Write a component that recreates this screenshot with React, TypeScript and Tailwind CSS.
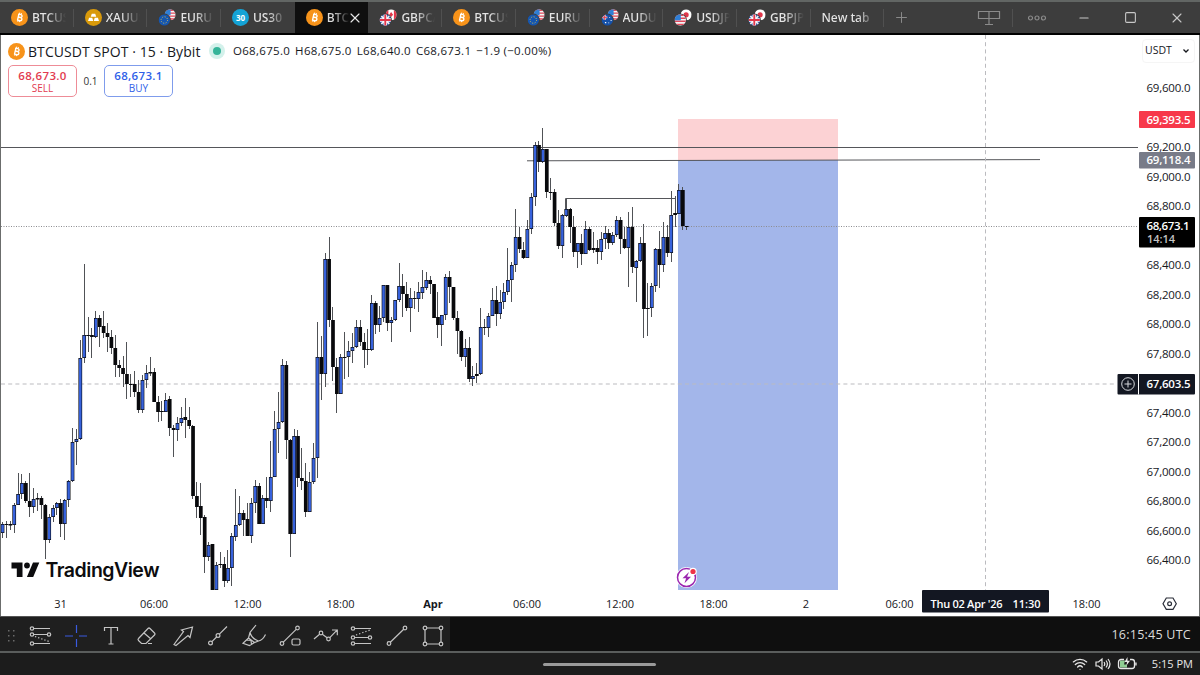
import React from 'react';
import { Minus, Plus, Square, Wifi, X } from 'lucide-react';

type Candle = [number, number, number, number, 0 | 1];

// high, body top, body bottom, low, rising
const candles: Candle[] = [
  [522, 524, 533, 538, 1], [521, 524, 525, 538, 0], [521, 524, 525.5, 530, 0], [503, 505, 525, 533, 1],
  [473, 494, 505, 505, 1], [474, 483, 494, 499, 1], [481, 483, 501, 503, 0], [473, 501, 507, 517, 0],
  [488, 499, 507, 513, 1], [493, 498, 499.5, 511, 0], [496, 498, 505, 519, 0], [504, 505, 540, 559, 0],
  [514, 517, 540, 543, 1], [505, 508, 517, 522, 1], [502, 503, 508, 515, 1], [499, 503, 524, 537, 0],
  [499, 500, 524, 540, 1], [480, 481, 500, 507, 1], [428, 442, 481, 482, 1], [429, 439, 442, 465, 1],
  [340, 358, 439, 440, 1], [264, 335, 358, 363, 1], [317, 335, 336, 352, 0], [328, 335, 337, 358, 0],
  [311, 318, 337, 338, 1], [315, 318, 327, 347, 0], [311, 326, 333, 338, 0], [323, 333, 337, 352, 0],
  [330, 337, 348, 354, 0], [335, 348, 365, 377, 0], [360, 365, 368, 377, 0], [356, 368, 374, 387, 0],
  [342, 374, 384, 399, 0], [374, 384, 385, 397, 0], [371, 384, 392, 397, 0], [380, 392, 410, 413, 0],
  [375, 380, 410, 413, 1], [365, 373, 380, 388, 1], [357, 372, 373.5, 376, 1], [368, 372, 402, 402, 0],
  [396, 402, 412, 422, 0], [401, 411, 412, 421, 0], [393, 400, 412, 412, 1], [396, 399, 428, 436, 0],
  [425, 428, 430, 457, 0], [417, 423, 430, 441, 1], [407, 418, 423, 426, 1], [398, 417, 420, 438, 0],
  [407, 420, 426, 429, 0], [425, 426, 496, 499, 0], [482, 496, 507, 518, 0], [483, 506, 518, 535, 0],
  [515, 517, 557, 573, 0], [542, 545, 557, 561, 1], [544, 544, 590, 590, 0], [562, 565, 590, 590, 1],
  [552, 564, 565, 568, 0], [557, 564, 581, 587, 0], [550, 568, 581, 583, 1], [533, 536, 568, 586, 1],
  [489, 525, 537, 541, 1], [496, 513, 525, 526, 1], [510, 513, 520, 536, 0], [503, 519, 536, 536, 0],
  [498, 503, 536, 543, 1], [480, 486, 503, 513, 1], [483, 486, 524, 524, 0], [495, 498, 524, 524, 1],
  [477, 498, 501, 508, 0], [441, 477, 501, 512, 1], [411, 429, 477, 477, 1], [392, 422, 429, 453, 1],
  [359, 365, 422, 423, 1], [361, 365, 440, 459, 0], [439, 440, 534, 557, 0], [429, 436, 534, 534, 1],
  [430, 436, 478, 487, 0], [448, 478, 481, 490, 0], [463, 481, 512, 517, 0], [472, 482, 512, 512, 1],
  [443, 458, 482, 484, 1], [322, 357, 458, 478, 1], [336, 357, 374, 400, 0], [253, 259, 374, 387, 1],
  [237, 259, 320, 327, 0], [307, 320, 367, 381, 0], [358, 367, 394, 413, 0], [354, 357, 394, 394, 1],
  [332, 357, 358, 379, 0], [341, 351, 357, 377, 1], [333, 347, 351, 363, 1], [320, 327, 347, 348, 1],
  [320, 327, 342, 346, 0], [333, 342, 350, 368, 0], [329, 349, 350, 365, 0], [295, 303, 350, 351, 1],
  [301, 303, 325, 334, 0], [306, 318, 325, 332, 1], [285, 285, 318, 322, 1], [285, 285, 323, 331, 0],
  [317, 320, 323, 342, 1], [300, 300, 320, 321, 1], [263, 286, 300, 302, 1], [274, 286, 294, 317, 0],
  [282, 294, 308, 311, 0], [288, 298, 308, 332, 1], [291, 298, 299, 309, 0], [282, 292, 299, 312, 1],
  [270, 287, 293, 299, 1], [272, 280, 288, 290, 1], [276, 280, 284, 294, 0], [284, 284, 318, 318, 0],
  [292, 317, 325, 338, 0], [315, 315, 325, 346, 1], [274, 277, 315, 320, 1], [271, 277, 287, 303, 0],
  [287, 287, 318, 320, 0], [311, 318, 331, 354, 0], [330, 331, 357, 361, 0], [339, 348, 357, 367, 1],
  [337, 348, 379, 382, 0], [366, 376, 379, 386, 1], [363, 374, 376, 383, 1], [308, 327, 374, 375, 1],
  [319, 327, 328, 335, 0], [313, 316, 328, 337, 1], [288, 300, 316, 316, 1], [286, 300, 314, 326, 0],
  [290, 302, 314, 319, 1], [283, 292, 302, 309, 1], [248, 280, 292, 295, 1], [262, 265, 280, 302, 1],
  [209, 237, 265, 272, 1], [227, 237, 249, 253, 0], [242, 250, 258, 259, 0], [220, 229, 258, 258, 1],
  [193, 197, 229, 234, 1], [142, 145, 197, 206, 1], [141, 145, 162, 172, 0], [128, 149, 162, 163, 1],
  [149, 149, 192, 198, 0], [178, 192, 193, 200, 0], [189, 192, 223, 226, 0], [210, 223, 246, 249, 0],
  [214, 215, 246, 258, 1], [198, 209, 216, 217, 1], [208, 209, 227, 243, 0], [216, 227, 252, 257, 0],
  [243, 243, 252, 268, 1], [234, 243, 254, 265, 0], [221, 229, 254, 254, 1], [227, 229, 250, 251, 0],
  [232, 248, 250, 253, 0], [240, 248, 252, 264, 0], [232, 239, 252, 260, 1], [226, 233, 239, 249, 1],
  [229, 233, 243, 249, 0], [232, 235, 243, 245, 1], [216, 220, 235, 237, 1], [217, 220, 239, 254, 0],
  [227, 239, 248, 249, 0], [212, 227, 248, 287, 1], [207, 227, 267, 273, 0], [260, 261, 268, 302, 1],
  [237, 243, 261, 262, 1], [224, 243, 309, 338, 0], [283, 308, 309, 336, 0], [283, 286, 308, 317, 1],
  [248, 249, 286, 292, 1], [231, 249, 265, 288, 0], [222, 237, 265, 272, 1], [225, 237, 253, 257, 0],
  [191, 215, 253, 262, 1], [196, 213, 215, 227, 0], [184, 190, 214, 214, 1], [187, 190, 226, 230, 0],
  [226, 226, 227, 230, 0],
];

const prices = [
  '69,600.0', '', '69,200.0', '69,000.0', '68,800.0', '', '68,400.0', '68,200.0', '68,000.0',
  '67,800.0', '', '67,400.0', '67,200.0', '67,000.0', '66,800.0', '66,600.0', '66,400.0',
];

const times: [number, string][] = [
  [60.5, '31'], [154, '06:00'], [247.5, '12:00'], [340.5, '18:00'], [433, 'Apr'], [527, '06:00'],
  [620, '12:00'], [713.5, '18:00'], [806, '2'], [899.5, '06:00'], [1086.5, '18:00'],
];

type FlagName = 'us' | 'eu' | 'gb' | 'ca' | 'au' | 'jp';

const Flag: React.FC<{ name: FlagName }> = ({ name }) => {
  switch (name) {
    case 'us':
      return (
        <>
          <rect width="12" height="12" fill="#f4f4f6" />
          <path d="M0 1h12M0 4.2h12M0 7.4h12M0 10.6h12" stroke="#e0485a" strokeWidth="1.5" />
          <rect width="6.5" height="6.3" fill="#2f7fd6" />
        </>
      );
    case 'eu':
      return (
        <>
          <rect width="12" height="12" fill="#1556b0" />
          <circle cx="6" cy="6" r="3.4" fill="none" stroke="#e8c94a" strokeWidth="1" strokeDasharray="1 1.67" />
        </>
      );
    case 'gb':
      return (
        <>
          <rect width="12" height="12" fill="#2a54a8" />
          <path d="M0 0l12 12M12 0L0 12" stroke="#f0f0f0" strokeWidth="1.8" />
          <path d="M6 0v12M0 6h12" stroke="#fff" strokeWidth="3.8" />
          <path d="M6 0v12M0 6h12" stroke="#e0374b" strokeWidth="2" />
        </>
      );
    case 'ca':
      return (
        <>
          <rect width="12" height="12" fill="#fff" />
          <path d="M0 0h3v12H0zM9 0h3v12H9zM6 3l2.2 3L6 8.5 3.8 6z" fill="#e0374b" />
        </>
      );
    case 'au':
      return (
        <>
          <rect width="12" height="12" fill="#1450a8" />
          <path d="M0 3.2h6M3.2 0v6" stroke="#fff" strokeWidth="2" />
          <path d="M0 3.2h6M3.2 0v6" stroke="#e0374b" strokeWidth="1" />
          <path d="M8 3h1v1H8zM9.5 6h1v1h-1zM7 8.5h1v1H7zM3.5 8h1.4v1.4H3.5z" fill="#fff" />
        </>
      );
    default:
      return (
        <>
          <rect width="12" height="12" fill="#fff" />
          <circle cx="6" cy="6" r="2.8" fill="#e0374b" />
        </>
      );
  }
};

const PairIcon: React.FC<{ front: FlagName; back: FlagName; id: string }> = ({ front, back, id }) => (
  <svg className="h-[18px] w-[18px] shrink-0" viewBox="0 0 18 18">
    <clipPath id={`${id}-flag`}>
      <circle cx="6" cy="6" r="6" />
    </clipPath>
    <g transform="translate(6.6 0.3) scale(.92)" clipPath={`url(#${id}-flag)`}>
      <Flag name={back} />
    </g>
    <circle cx="6.3" cy="11" r="6.5" fill="#3d3d3d" />
    <g transform="translate(0.6 5.3) scale(.95)" clipPath={`url(#${id}-flag)`}>
      <Flag name={front} />
    </g>
  </svg>
);

const BitcoinIcon = () => (
  <svg className="h-[17px] w-[17px] shrink-0" viewBox="0 0 18 18">
    <circle cx="9" cy="9" r="9" fill="#f7931a" />
    <g transform="rotate(13 9 9)" fill="none" stroke="#fff">
      <path d="M7 5.7h2.8a1.55 1.55 0 0 1 0 3.1H7.5h2.7a1.7 1.7 0 0 1 0 3.4H7M7.6 5.7v6.5" strokeWidth="1.5" />
      <path d="M8.2 4v1.6M10 4v1.6M8.2 12.2v1.6M10 12.2v1.6" strokeWidth="1" />
    </g>
  </svg>
);

const GoldIcon = () => (
  <svg className="h-[17px] w-[17px] shrink-0" viewBox="0 0 18 18">
    <circle cx="9" cy="9" r="9" fill="#d99a0b" />
    <path d="M7.2 5h3.6l1.1 3.2H6.1zM4.3 9.2h3.4l1 3.4H3.2zM10.3 9.2h3.4l1.1 3.4H9.3z" fill="#fff" />
  </svg>
);

const DowIcon = () => (
  <span className="flex h-[17px] w-[17px] shrink-0 items-center justify-center rounded-full bg-[#14a3d6] text-[8px] font-bold text-white">
    30
  </span>
);

const tabs: { label: string; icon: React.ReactNode; active?: boolean }[] = [
  { label: 'BTCUS', icon: <BitcoinIcon /> },
  { label: 'XAUUS', icon: <GoldIcon /> },
  { label: 'EURU', icon: <PairIcon id="eurusd" front="eu" back="us" /> },
  { label: 'US30', icon: <DowIcon /> },
  { label: 'BTC', icon: <BitcoinIcon />, active: true },
  { label: 'GBPCA', icon: <PairIcon id="gbpcad" front="gb" back="ca" /> },
  { label: 'BTCUS', icon: <BitcoinIcon /> },
  { label: 'EURU', icon: <PairIcon id="eurusd2" front="eu" back="us" /> },
  { label: 'AUDU', icon: <PairIcon id="audusd" front="au" back="us" /> },
  { label: 'USDJP', icon: <PairIcon id="usdjpy" front="us" back="jp" /> },
  { label: 'GBPJP', icon: <PairIcon id="gbpjpy" front="gb" back="jp" /> },
];

const TabBar = () => (
  <header className="flex h-[35px] items-stretch border-t-2 border-b-2 border-t-[#626664] border-b-black bg-[#3d3d3d] text-[12px] font-semibold text-[#dcdcdc]">
    {tabs.map((tab, i) =>
      tab.active ? (
        <div key={i} className="flex w-[73.7px] shrink-0 items-center bg-[#0f0f0f] pl-[11px]">
          {tab.icon}
          <span className="ml-1 w-[23px] overflow-hidden bg-gradient-to-r from-[#dcdcdc] from-30% to-[#0f0f0f] bg-clip-text whitespace-nowrap text-transparent">
            {tab.label}
          </span>
          <X className="-ml-[3px] h-4 w-4 text-[#e8e8e8]" strokeWidth={1.7} />
        </div>
      ) : (
        <div
          key={i}
          className={`flex w-[73.7px] shrink-0 items-center pl-[11px] ${i === 3 ? 'rounded-br-md' : ''} ${i === 5 ? 'rounded-bl-md' : ''}`}
        >
          {tab.icon}
          <span className="ml-1 w-[34px] overflow-hidden bg-gradient-to-r from-[#e4e4e4] from-45% to-[#3d3d3d] bg-clip-text tracking-[-0.1px] whitespace-nowrap text-transparent">
            {tab.label}
          </span>
          {i !== 3 && <span className="ml-auto h-[18px] w-px bg-[#505050]" />}
        </div>
      ),
    )}
    <div className="flex w-[73.3px] shrink-0 items-center pl-[11px]">
      <span className="bg-gradient-to-r from-[#e4e4e4] from-75% to-[#777] bg-clip-text tracking-[-0.1px] text-transparent">New tab</span>
      <span className="ml-auto h-[18px] w-px bg-[#505050]" />
    </div>
    <div className="flex grow items-center text-[#8b8b8b]">
      <Plus className="ml-[9px] h-[17px] w-[17px]" strokeWidth={1.4} />
      <svg className="ml-[67px] h-4 w-6" viewBox="0 0 24 16" fill="none" stroke="currentColor" strokeWidth="1.2">
        <path d="M1.5 1.5h21v7h-21zM12 1.5v13M8 14.5h8" />
      </svg>
      <span className="ml-[11px] h-[18px] w-px bg-[#505050]" />
      <svg className="ml-[14px] h-2 w-5" viewBox="0 0 20 8" fill="none" stroke="currentColor" strokeWidth="1.2">
        <circle cx="3.5" cy="4" r="2" />
        <circle cx="10" cy="4" r="2" />
        <circle cx="16.5" cy="4" r="2" />
      </svg>
      <Minus className="ml-[30px] h-[14px] w-[14px] text-[#c8c8c8]" strokeWidth={2} />
      <Square className="ml-[33px] h-[13px] w-[13px] text-[#c8c8c8]" strokeWidth={2} />
      <X className="ml-[32px] h-4 w-4 text-[#c8c8c8]" strokeWidth={1.6} />
    </div>
  </header>
);

const Chart = () => (
  <svg className="block h-[581px] w-[1198px]" viewBox="1 35 1198 581" fontSize="11.5" fill="#16181d">
    {/* Short position */}
    <rect x="678" y="119" width="160" height="41" fill="#fcd2d4" />
    <rect x="678" y="160" width="160" height="430" fill="#a3b6ea" />

    {/* Levels */}
    <path d="M1 147.5H1138M527 160.8L1040 159.6M565.5 209V198.5H675" stroke="#55565a" strokeWidth="1" fill="none" />
    <path d="M1 226.5H1138" stroke="#8c8c90" strokeDasharray="1 1.5" />
    <path d="M1 384H1117M985.5 35V590" stroke="#bbbbbf" strokeDasharray="4 3.2" />

    {/* Candles */}
    {candles.map(([high, top, bottom, low, rising], i) => {
      const x = 2.5 + i * 3.8875;
      const height = Math.max(1, bottom - top);
      return (
        <g key={i}>
          <rect x={Math.floor(x)} y={high} width="1" height={low - high} fill="#505256" />
          <rect x={x - 1.8} y={top} width="3.7" height={height} fill="#08090c" />
          {rising === 1 && height > 2 && (
            <rect x={x - 1.2} y={top + 0.7} width="2.5" height={height - 1.4} fill="#3762dc" />
          )}
        </g>
      );
    })}

    {/* Price axis */}
    {prices.map((price, i) =>
      price ? (
        <text key={i} x="1146.5" y={92 + i * 29.53} textLength="44" fontWeight="500">
          {price}
        </text>
      ) : null,
    )}
    <rect x="1139" y="111" width="56" height="17" rx="1" fill="#f7384a" />
    <rect x="1139" y="152" width="56" height="16.5" rx="1" fill="#787b88" />
    <rect x="1139" y="217" width="56" height="30.5" rx="1" fill="#000" />
    <rect x="1117.5" y="374" width="77.5" height="20.5" rx="1" fill="#131722" />
    <path d="M1138.5 374v20.5" stroke="#fff" />
    <g fill="#fff" fontWeight="600">
      <text x="1146.5" y="123.5" textLength="44">69,393.5</text>
      <text x="1146.5" y="164" textLength="44">69,118.4</text>
      <text x="1146.5" y="230" textLength="43">68,673.1</text>
      <text x="1147" y="243" textLength="28" fontSize="11" fill="#c4c4c4">14:14</text>
      <text x="1146.5" y="388" textLength="44">67,603.5</text>
    </g>
    <g fill="none" stroke="#d5d7dc" strokeWidth="1">
      <circle cx="1128" cy="384" r="6.3" />
      <path d="M1124.5 384h7M1128 380.5v7" />
    </g>

    {/* Time axis */}
    {times.map(([x, label]) => (
      <text key={x} x={x} y="607.5" textAnchor="middle" fontSize="11" fontWeight={label === 'Apr' ? 700 : 500}>
        {label}
      </text>
    ))}
    <rect x="922" y="590" width="127" height="22.5" rx="1" fill="#131722" />
    <g fill="#fff" fontWeight="600" fontSize="11">
      <text x="930.5" y="607.5" textLength="72">Thu 02 Apr '26</text>
      <text x="1012.5" y="607.5" textLength="28">11:30</text>
    </g>
    <g fill="none" stroke="#2a2e39" strokeWidth="1.2">
      <path d="M1166.3 598h6.7l3.3 5.7-3.3 5.7h-6.7l-3.3-5.7z" />
      <circle cx="1169.6" cy="603.7" r="1.9" />
    </g>

    {/* Event marker */}
    <circle cx="686.5" cy="577.5" r="10.5" fill="#fff" />
    <circle cx="686.5" cy="577.5" r="9" fill="#fff" stroke="#9c27b0" strokeWidth="1.5" />
    <path d="M689 572l-6.5 6.200h3.6l-1.600 5 6.500-6.400h-3.900z" fill="#9c27b0" />
    <circle cx="693" cy="571.5" r="3.8" fill="#fff" />
    <circle cx="693" cy="571.5" r="2.6" fill="#ee3347" />

    {/* Brand */}
    <g fill="#0c0c0e">
      <path d="M11.5 562.5h11V577h-5.700v-8.500h-5.300zM33 562.5h6.300L33.200 577h-6.300z" />
      <circle cx="27" cy="565.5" r="2.9" />
      <text x="45.5" y="576.7" fontFamily="Inter, sans-serif" fontSize="19.5" fontWeight="600" textLength="114">
        TradingView
      </text>
    </g>
  </svg>
);

const Legend = () => (
  <div className="absolute top-[6px] left-[7px] text-[#16181d]">
    <div className="flex h-5 items-center">
      <BitcoinIcon />
      <span className="ml-[3px] w-[173px] text-[14px] font-medium tracking-[0.07px] whitespace-nowrap">BTCUSDT SPOT · 15 · Bybit</span>
      <span className="ml-[8px] flex h-4 w-4 items-center justify-center rounded-full bg-[#d3f1eb]">
        <span className="h-2 w-2 rounded-full bg-[#35b499]" />
      </span>
      <span className="ml-2 flex gap-[5px] text-[11.5px] font-medium tracking-[0.3px] whitespace-nowrap">
        <span>O68,675.0</span>
        <span>H68,675.0</span>
        <span>L68,640.0</span>
        <span>C68,673.1</span>
        <span>−1.9 (−0.00%)</span>
      </span>
    </div>
    <div className="mt-[4px] flex items-center">
      <button className="flex h-8 w-[69px] flex-col items-center justify-center rounded-[5px] border border-[#ee8c97] bg-white text-[#e23b50]">
        <span className="text-[11.5px] leading-[13px] font-semibold tracking-[0.35px]">68,673.0</span>
        <span className="text-[10px] leading-3">SELL</span>
      </button>
      <span className="w-[27px] text-center text-[10px] text-[#333]">0.1</span>
      <button className="flex h-8 w-[69px] flex-col items-center justify-center rounded-[5px] border border-[#7f9cec] bg-white text-[#2f5fe8]">
        <span className="text-[11.5px] leading-[13px] font-semibold tracking-[0.35px]">68,673.1</span>
        <span className="text-[10px] leading-3">BUY</span>
      </button>
    </div>
  </div>
);

const tools: React.ReactNode[] = [
  <>
    <path d="M4.7 3.5H21M4.7 9.5h13.6M4.7 18.5H21" />
    <path d="M6 11.5l14 5" strokeDasharray="1.3 2" />
    <circle cx="3" cy="3.5" r="1.7" /><circle cx="20" cy="9.5" r="1.7" /><circle cx="3" cy="9.5" r="1.7" /><circle cx="3" cy="18.5" r="1.7" />
  </>,
  <path d="M11.5 0v8M11.5 14v8M0 11h8M14 11h8" stroke="#3a5be0" />,
  <path d="M4.5 6V2.500h13V6M11 2.500v16.500M8.500 19h5" />,
  <path d="M2.500 13.500L12 3.500q1-1 2 0l4.500 4.500q1 1 0 2L10 18.500H5.500l-3-3q-1-1 0-2zM8 8l7 6M12 18.500h4" />,
  <path d="M2 19.500L11.500 6.500 9.500 5 20.500 2 18 12.500l-2-2L4 20.500z" />,
  <>
    <path d="M4.900 16.700l4.700-4.700M12.400 9.200L20 1.500" />
    <circle cx="3.500" cy="18" r="1.900" /><circle cx="11" cy="10.500" r="1.900" />
  </>,
  <path d="M13 0L7 7.500q1.500 6 8.500 8.500Q20 15 22.500 9.500M7 7.500l-1.500 5.500 6 4.500 4-1.500M5.500 13L0 18.200l6.500 2.300 5-3M3.500 15l4.500.5.500 4" />,
  <>
    <path d="M4.300 17.200L17.200 4.300" />
    <circle cx="3" cy="18.500" r="1.800" /><circle cx="18.500" cy="3" r="1.800" />
    <rect x="13" y="14" width="8" height="6" rx="1.5" />
  </>,
  <>
    <path d="M-1 14l5.600-4.800M7.300 9.200l4.800 3.500M14.800 12.700L22 5.200M17 5h5.300v5.200" />
    <circle cx="6" cy="8" r="1.800" /><circle cx="13.500" cy="14" r="1.800" />
  </>,
  <>
    <path d="M4.700 3.500H21M4.700 12.500h13.600M4.700 18.500H21" />
    <path d="M6 10l14-5" strokeDasharray="1.3 2" />
    <circle cx="3" cy="3.500" r="1.700" /><circle cx="20" cy="12.500" r="1.700" /><circle cx="3" cy="12.500" r="1.700" /><circle cx="3" cy="18.500" r="1.700" />
  </>,
  <>
    <path d="M4.300 17.200L17.700 4.300" />
    <circle cx="3" cy="18.500" r="1.800" /><circle cx="19" cy="3" r="1.800" />
  </>,
  <>
    <path d="M4.800 3h12.400M4.800 19h12.400M3 4.800v12.400M19 4.800v12.400" />
    <circle cx="3" cy="3" r="1.800" /><circle cx="19" cy="3" r="1.800" /><circle cx="3" cy="19" r="1.800" /><circle cx="19" cy="19" r="1.800" />
  </>,
];

const DrawingToolbar = () => (
  <div className="flex h-[35px] items-stretch border-t border-[#555] bg-[#0f0f0f]">
    <div className="flex w-[450px] items-center bg-[#1f1f1f] pt-[3px] pl-[7px] text-[#c4c4c4]">
      <svg className="mr-[12px] h-4 w-2.5" viewBox="0 0 10 16" fill="#6a6a6a">
        {[2, 7, 12].map((y) => (
          <React.Fragment key={y}>
            <rect x="1" y={y} width="1.5" height="1.5" />
            <rect x="6" y={y} width="1.5" height="1.5" />
          </React.Fragment>
        ))}
      </svg>
      <div className="flex gap-[13.7px]">
        {tools.map((tool, i) => (
          <svg
            key={i}
            className="h-[22px] w-[22px] overflow-visible"
            viewBox="0 0 22 22"
            fill="none"
            stroke="currentColor"
            strokeWidth="1.2"
          >
            {tool}
          </svg>
        ))}
      </div>
    </div>
    <div className="flex grow items-center justify-end pt-[2px] pr-[9px] text-[12.5px] font-medium tracking-[0.25px] text-[#dcdcdc]">
      16:15:45 UTC
    </div>
  </div>
);

const Taskbar = () => (
  <footer className="flex h-6 items-center justify-end border-t-2 border-[#5a5d5c] bg-[#1c1c1c] pr-[7px] text-[11px] text-[#e8e8e8]">
    <span className="mr-[416px] h-[3px] w-[113px] rounded-full bg-[#9a9a9a]" />
    <Wifi className="h-4 w-4" strokeWidth={2} />
    <svg className="ml-[7px] h-4 w-4" viewBox="0 0 16 16" fill="none" stroke="currentColor" strokeWidth="1.2">
      <path d="M1 6h2.500L7 3v10l-3.500-3H1zM9 6q1.500 2 0 4M11 4.500q2.800 3.500 0 7M13 3q4 5 0 10" />
    </svg>
    <svg className="ml-[6px] h-4 w-5" viewBox="0 0 20 16" fill="none" stroke="currentColor" strokeWidth="1.3">
      <path d="M3 4.500h5L7 8.500h3v3H3z" fill="#8fce93" stroke="none" />
      <path d="M7 3.500H4A2.500 2.500 0 0 0 1.500 6v4A2.500 2.500 0 0 0 4 12.500h11a2.500 2.500 0 0 0 2.500-2.500V6A2.500 2.500 0 0 0 15 3.500h-2M19 6.500v3" />
      <path d="M10.500 1L7.500 6H10l-.5 3.500L13 4.800h-2.500z" fill="currentColor" stroke="none" />
    </svg>
    <span className="ml-[15px] whitespace-nowrap">5:15 PM</span>
  </footer>
);

const App: React.FC = () => (
  <div className="flex h-[675px] w-[1200px] flex-col overflow-hidden bg-[#1c1c1c] font-['Open_Sans','Noto_Sans',sans-serif]">
    <TabBar />
    <main className="relative border-x border-[#6b6d6c] bg-white">
      <Chart />
      <Legend />
      <button className="absolute top-[4px] right-[4px] flex h-6 w-[53px] items-center justify-between rounded border border-[#f5f5f5] bg-white pr-1 pl-[2px] text-[10.5px] font-medium text-[#16181d]">
        USDT
        <svg className="h-1.5 w-2" viewBox="0 0 8 6" fill="none" stroke="currentColor" strokeWidth="1.3">
          <path d="M1.500 1.500L4 4l2.500-2.500" />
        </svg>
      </button>
    </main>
    <DrawingToolbar />
    <Taskbar />
  </div>
);

export default App;
